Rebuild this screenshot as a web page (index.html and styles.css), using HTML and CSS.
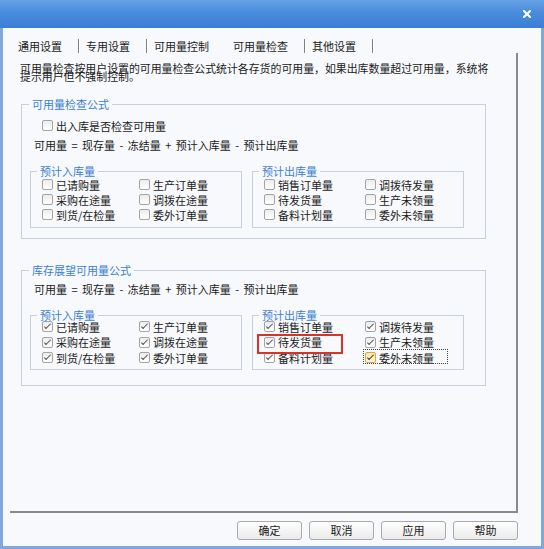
FILE: index.html
```html
<!DOCTYPE html>
<html lang="zh-CN">

<head>
    <meta charset="UTF-8">
    <meta name="viewport" content="width=device-width, initial-scale=1.0">
    <title>选项</title>

    <link rel="stylesheet" href="styles.css">
</head>

<body>
    <div class="window">
        <!-- blue caption bar, only the close button on it -->
        <div class="titlebar">
            <svg class="close" viewBox="0 0 8 8" width="8" height="8">
                <path d="M1 1 L7 7 M7 1 L1 7" stroke="#fff" stroke-width="2" stroke-linecap="square" />
            </svg>
        </div>

        <div class="frame">
            <!-- tab strip, the active tab has no separator on its left -->
            <div class="tabs">
                <span class="tab">通用设置</span>
                <span class="tab">专用设置</span>
                <span class="tab plain">可用量控制</span>
                <span class="tab">可用量检查</span>
                <span class="tab">其他设置</span>
            </div>

            <div class="panel">
                <p class="desc">可用量检查按用户设置的可用量检查公式统计各存货的可用量，如果出库数量超过可用量，系统将<br>提示用户但不强制控制。</p>

                <!-- first formula group -->
                <fieldset class="group">
                    <legend>可用量检查公式</legend>
                    <div class="group-body">
                        <label class="check solo"><span class="box"></span>出入库是否检查可用量</label>
                        <div class="formula">可用量 = 现存量 - 冻结量 + 预计入库量 - 预计出库量</div>
                        <div class="subgroups">
                            <fieldset class="sub">
                                <legend>预计入库量</legend>
                                <div class="checks">
                                    <label class="check"><span class="box"></span>已请购量</label>
                                    <label class="check"><span class="box"></span>生产订单量</label>
                                    <label class="check"><span class="box"></span>采购在途量</label>
                                    <label class="check"><span class="box"></span>调拨在途量</label>
                                    <label class="check"><span class="box"></span>到货/在检量</label>
                                    <label class="check"><span class="box"></span>委外订单量</label>
                                </div>
                            </fieldset>
                            <fieldset class="sub">
                                <legend>预计出库量</legend>
                                <div class="checks wide">
                                    <label class="check"><span class="box"></span>销售订单量</label>
                                    <label class="check"><span class="box"></span>调拨待发量</label>
                                    <label class="check"><span class="box"></span>待发货量</label>
                                    <label class="check"><span class="box"></span>生产未领量</label>
                                    <label class="check"><span class="box"></span>备料计划量</label>
                                    <label class="check"><span class="box"></span>委外未领量</label>
                                </div>
                            </fieldset>
                        </div>
                    </div>
                </fieldset>

                <!-- second formula group, everything ticked -->
                <fieldset class="group outlook">
                    <legend>库存展望可用量公式</legend>
                    <div class="group-body">
                        <div class="formula">可用量 = 现存量 - 冻结量 + 预计入库量 - 预计出库量</div>
                        <div class="subgroups">
                            <fieldset class="sub">
                                <legend>预计入库量</legend>
                                <div class="checks tight">
                                    <label class="check on"><span class="box"></span>已请购量</label>
                                    <label class="check on"><span class="box"></span>生产订单量</label>
                                    <label class="check on"><span class="box"></span>采购在途量</label>
                                    <label class="check on"><span class="box"></span>调拨在途量</label>
                                    <label class="check on"><span class="box"></span>到货/在检量</label>
                                    <label class="check on"><span class="box"></span>委外订单量</label>
                                </div>
                            </fieldset>
                            <fieldset class="sub">
                                <legend>预计出库量</legend>
                                <div class="checks wide tight">
                                    <label class="check on"><span class="box"></span>销售订单量</label>
                                    <label class="check on"><span class="box"></span>调拨待发量</label>
                                    <label class="check on marked"><span class="box"></span>待发货量</label>
                                    <label class="check on"><span class="box"></span>生产未领量</label>
                                    <label class="check on"><span class="box"></span>备料计划量</label>
                                    <label class="check on hot focus"><span class="box"></span>委外未领量</label>
                                </div>
                            </fieldset>
                        </div>
                    </div>
                </fieldset>
            </div>

            <div class="buttons">
                <button>确定</button>
                <button>取消</button>
                <button>应用</button>
                <button>帮助</button>
            </div>
        </div>
    </div>
</body>

</html>
```

FILE: styles.css
```css
/* base font, the dialog uses one small size nearly everywhere */
body {
    margin: 0;
    font-family: "Noto Sans CJK SC", "Noto Sans", sans-serif;
    font-size: 11px;
    color: #1b1b1b;
}

.window {
    width: 544px;
    height: 549px;
    display: flex;
    flex-direction: column;
}

/* caption bar */
.titlebar {
    height: 28px;
    flex: none;
    display: flex;
    justify-content: flex-end;
    align-items: center;
    padding-right: 13px;
    box-sizing: border-box;
    background: linear-gradient(#65a2e6, #4a8cdc 45%, #3b7ed4);
}

/* window body with the thin blue frame */
.frame {
    flex: 1;
    border: 3px solid #7fa9dd;
    border-top: 0;
    background: #f7f9fc;
}

/* tab strip */
.tabs {
    display: flex;
    margin-top: 11px;
    padding-left: 8px;
    height: 14px;
}
.tab {
    padding: 0 16px 0 7px;
    line-height: 14px;
    border-right: 1px solid #808080;
    box-shadow: 1px 0 0 #fff;
}
.tab.plain {
    border-right-color: transparent;
    box-shadow: none;
}

/* page of the active tab */
.panel {
    margin: 0 23px 0 7px;
    height: 460px;
    box-sizing: border-box;
    border-right: 2px solid #8a8a8a;
    border-bottom: 2px solid #8a8a8a;
    padding: 11px 0 0 10px;
}

.desc {
    margin: 0;
    font-size: 10.9px;
    line-height: 8px;
}

/* group boxes */
fieldset {
    margin: 0;
    padding: 0;
    min-width: 0;
    border: 1px solid #c7d0dc;
}
legend {
    padding: 0 3px;
    color: #3c7ed6;
}

.group {
    width: 465px;
    box-sizing: border-box;
    margin: 17px 0 0 1px;
}
.group > legend {
    margin-left: 7px;
    line-height: 14px;
}
.group-body {
    padding: 0 0 10px 8px;
}
.group.outlook {
    margin-top: 24px;
}
.group.outlook .group-body {
    padding-bottom: 15px;
}

.formula {
    margin: 5px 0 0 4px;
    line-height: 14px;
    word-spacing: 2px;
}

.subgroups {
    display: flex;
    gap: 10px;
    margin-top: 13px;
}
.sub {
    width: 212px;
    box-sizing: border-box;
}
.sub > legend {
    margin-left: 6px;
    line-height: 12px;
}

/* two columns of check boxes inside a sub group */
.checks {
    display: grid;
    grid-template-columns: 97px 1fr;
    grid-auto-rows: 15px;
    padding: 0 0 5px 11px;
}
.checks.wide {
    grid-template-columns: 101px 1fr;
}
.checks.tight {
    grid-auto-rows: 15.5px;
    margin-top: -2px;
    padding-bottom: 3px;
}

/* check box with its label */
.check {
    display: flex;
    align-items: center;
    height: 15px;
    position: relative;
    white-space: nowrap;
}
.check.solo {
    margin: 7px 0 0 12px;
}
.box {
    width: 11px;
    height: 11px;
    flex: none;
    box-sizing: border-box;
    margin-right: 3px;
    border: 1px solid #a4a4a4;
    border-radius: 2px;
    background: linear-gradient(#ececec, #fff);
    position: relative;
}
.on .box::after {
    content: "";
    position: absolute;
    left: 3px;
    top: 0;
    width: 2px;
    height: 6px;
    border: solid #555;
    border-width: 0 1.5px 1.5px 0;
    transform: rotate(45deg);
}

/* the box under the mouse */
.hot .box {
    border-color: #e0a63c;
    background: linear-gradient(#fbe6a6, #fff6d8);
}
.hot .box::after {
    border-color: #3a3a3a;
}

/* keyboard focus rectangle */
.focus::after {
    content: "";
    position: absolute;
    left: -2px;
    top: -1px;
    width: 83px;
    height: 13px;
    border: 1px dotted #444;
}

/* red frame drawn round one option */
.marked::before {
    content: "";
    position: absolute;
    left: -7px;
    top: -1px;
    width: 82px;
    height: 16px;
    border: 2px solid #d7332b;
    z-index: 1;
}

/* OK / Cancel / Apply / Help */
.buttons {
    display: flex;
    justify-content: flex-end;
    gap: 7px;
    margin: 8px 23px 0 0;
}
.buttons button {
    width: 65px;
    height: 19px;
    padding: 0;
    font-family: inherit;
    font-size: 11px;
    line-height: 17px;
    color: #1b1b1b;
    border: 1px solid #a9a9a9;
    border-radius: 3px;
    background: linear-gradient(#fefefe, #ebebeb);
}
```
